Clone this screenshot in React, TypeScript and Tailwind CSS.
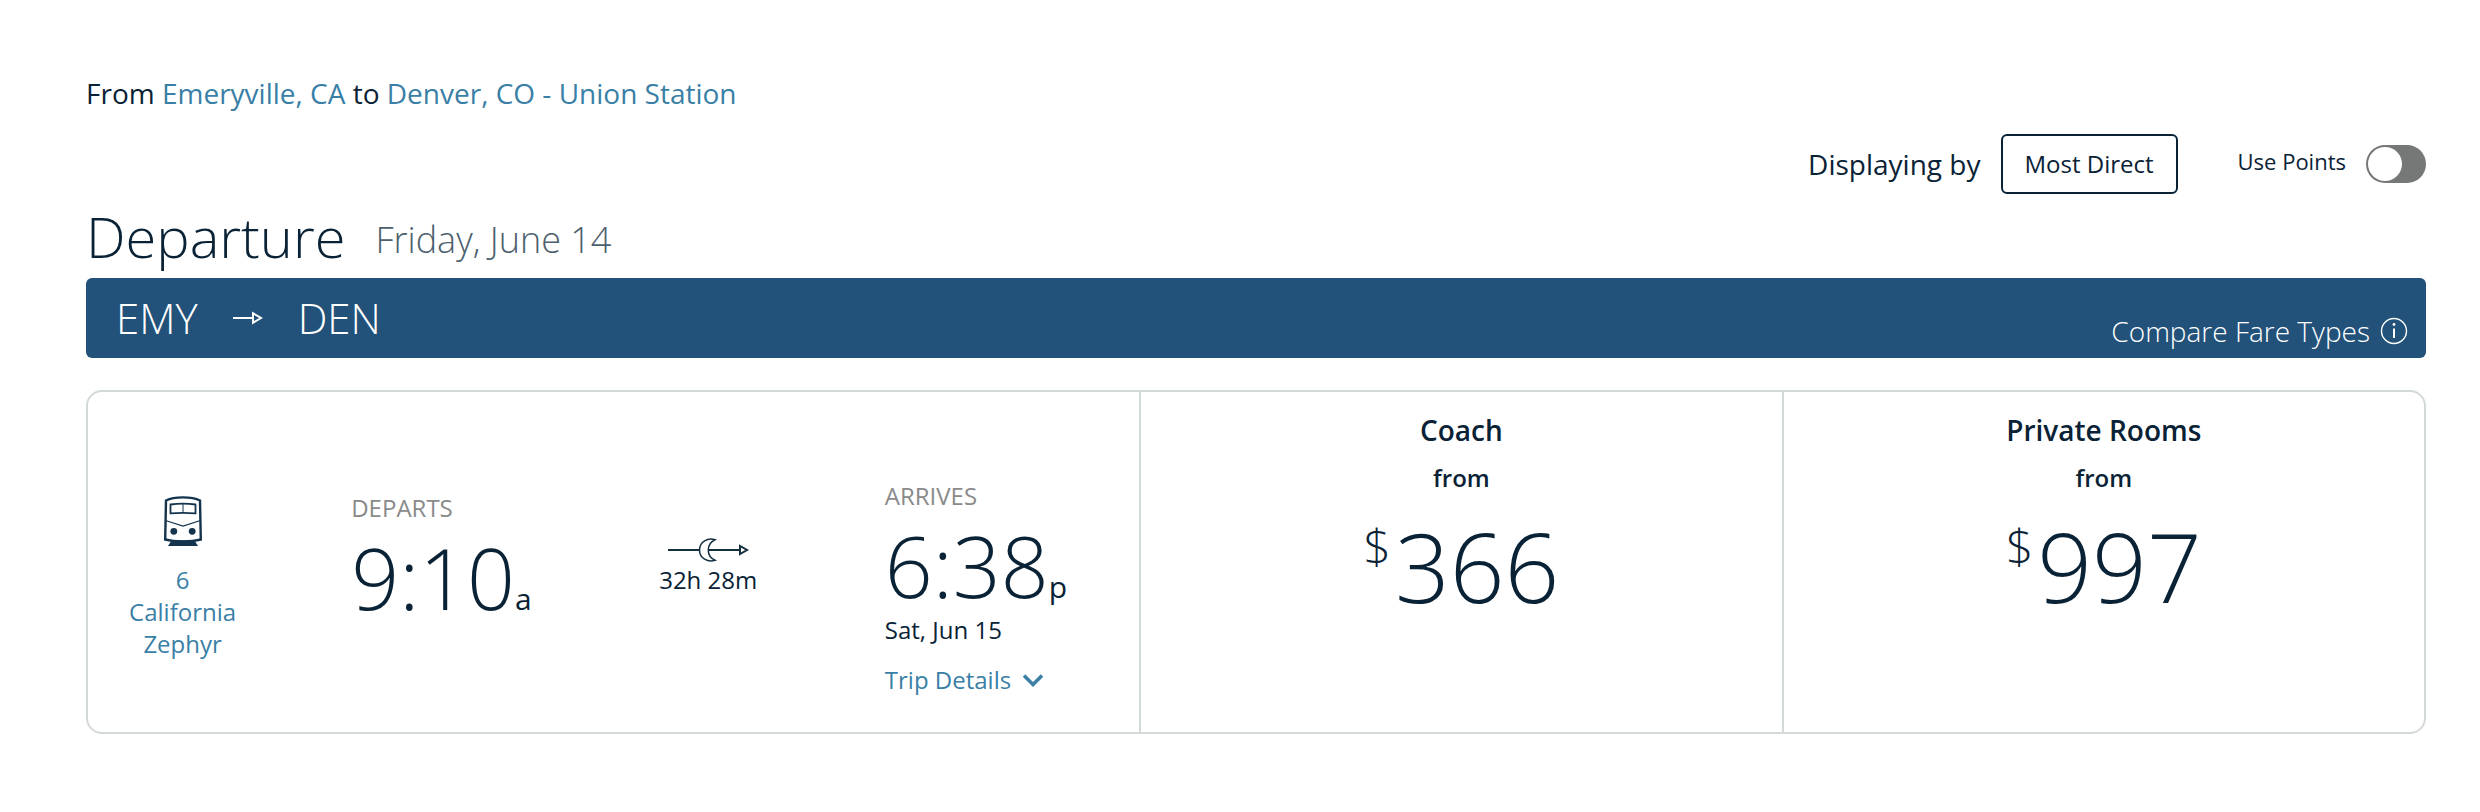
import { useState } from 'react'

interface FareProps {
  name: string
  price: number
}

interface TimeProps {
  label: string
  time: string
  suffix: string
}

function TrainIcon() {
  return (
    <svg width="38" height="50" viewBox="0 0 38 50" fill="none" stroke="#14344d" strokeWidth="2.4" aria-hidden="true">
      <path d="M2 4.5C7 2 13 1.4 19 1.4S31 2 36 4.5L36.8 43.5C31 45 25 45.4 19 45.4S7 45 1.2 43.5Z" />
      <path d="M6.5 8.5C14 7.4 24 7.4 31.5 8.5V17.3C24 16.8 14 16.8 6.5 17.3Z" strokeWidth="1.8" />
      <path d="M19 8V17" strokeWidth="1" />
      <path d="M1.5 24.5L19 30L36.5 24.5" strokeWidth="1.3" />
      <circle cx="9.8" cy="35.3" r="3.4" fill="#14344d" stroke="none" />
      <circle cx="28.2" cy="35.3" r="3.4" fill="#14344d" stroke="none" />
      <path d="M7.5 44.5H30.5L34 50H4Z" fill="#14344d" stroke="none" />
    </svg>
  )
}

function OvernightIcon() {
  return (
    <svg width="82" height="26" viewBox="0 0 82 26" fill="none" stroke="#14303f" strokeWidth="2" aria-hidden="true">
      <path d="M1 12H32M41 12H73" />
      <path d="M48 1.7C41-.6 32.5 3.500 32.500 12S41 24.600 48 22.300C39 18 39 6 48 1.700Z" strokeWidth="1.500" />
      <path d="M73 8V16L80 12Z" />
    </svg>
  )
}

function ArrowIcon() {
  return (
    <svg width="30" height="14" viewBox="0 0 30 14" fill="none" stroke="currentColor" strokeWidth="2" aria-hidden="true">
      <path d="M0 7H19" />
      <path d="M20 2.2V11.8L28 7Z" />
    </svg>
  )
}

function InfoIcon() {
  return (
    <svg width="28" height="28" viewBox="0 0 28 28" fill="none" stroke="currentColor" aria-hidden="true">
      <circle cx="14" cy="14" r="12.5" strokeWidth="1.4" />
      <path d="M14 11.5V21" strokeWidth="2" />
      <circle cx="14" cy="7.5" r="1.4" fill="currentColor" stroke="none" />
    </svg>
  )
}

function TripTime({ label, time, suffix }: TimeProps) {
  return (
    <>
      <p className="text-2xl leading-8 text-[#8a8a8a]">{label}</p>
      <p className="mt-3 whitespace-nowrap text-[84px] leading-[84px] font-light">
        {time}
        <span className="text-[30px] leading-none font-normal">{suffix}</span>
      </p>
    </>
  )
}

function Fare({ name, price }: FareProps) {
  return (
    <section className="flex flex-col items-center border-l-2 border-[#d3d8d8] pt-[18px] font-semibold">
      <h2 className="text-[28px] leading-10">{name}</h2>
      <p className="mt-3 text-2xl leading-8">from</p>
      <p className="mt-6 flex items-start gap-1 font-light">
        <span className="mt-1 text-5xl leading-12">$</span>
        <span className="text-[96px] leading-[96px]">{price}</span>
      </p>
    </section>
  )
}

export default function App() {
  const [usePoints, setUsePoints] = useState(false)

  return (
    <main className="min-h-screen bg-white pt-[73px] pr-[54px] pb-[76px] pl-[86px] font-['Open_Sans',sans-serif] text-[#0a2235]">
      <p className="text-[28px] leading-10">
        From <a href="#origin" className="text-[#3a7fa6]">Emeryville, CA</a> to{' '}
        <a href="#destination" className="text-[#3a7fa6]">Denver, CO - Union Station</a>
      </p>

      <div className="mt-[21px] flex items-center justify-end">
        <span className="text-[28px] leading-10">Displaying by</span>
        <button className="ml-5 h-[60px] rounded-md border-2 border-[#0a2235] px-[22px] text-2xl">Most Direct</button>
        <label htmlFor="use-points" className="ml-[60px] pb-1.5 text-[22px] leading-8">Use Points</label>
        <input
          id="use-points"
          type="checkbox"
          role="switch"
          checked={usePoints}
          onChange={(e) => setUsePoints(e.target.checked)}
          className="ml-5 flex h-[38px] w-[60px] appearance-none items-center rounded-full bg-[#757877] px-0.5 before:size-[34px] before:rounded-full before:bg-white checked:justify-end checked:bg-[#20527a]"
        />
      </div>

      <div className="mt-[10px] flex items-end gap-[30px]">
        <h1 className="text-[56px] leading-16 font-light">Departure</h1>
        <p className="pb-2 text-4xl leading-10 font-light text-[#4c606d]">Friday, June 14</p>
      </div>

      <div className="mt-2.5 flex h-20 items-center justify-between rounded-md bg-[#225279] pr-[18px] pl-[30px] text-white">
        <div className="flex items-center gap-[35px] text-[42px] leading-14 font-light">
          <span>EMY</span>
          <ArrowIcon />
          <span>DEN</span>
        </div>
        <button className="flex items-center gap-2.5 self-end pb-[7px] text-[28px] leading-10 font-light">
          Compare Fare Types
          <InfoIcon />
        </button>
      </div>

      <article className="mt-8 grid grid-cols-[90fr_55fr_55fr] rounded-2xl border-2 border-[#d3d8d8]">
        <div className="grid grid-cols-[18fr_32fr_18fr_32fr] items-start pt-[88px] pb-9">
          <div className="flex flex-col items-center pt-4">
            <TrainIcon />
            <a href="#train" className="mt-[18px] text-center text-2xl leading-8 text-[#3a7fa6]">
              6<br />California<br />Zephyr
            </a>
          </div>
          <div className="pt-3 pl-[74px]">
            <TripTime label="DEPARTS" time="9:10" suffix="a" />
          </div>
          <div className="flex flex-col items-center pt-[58px]">
            <OvernightIcon />
            <p className="text-2xl leading-8">32h 28m</p>
          </div>
          <div className="pl-[82px]">
            <TripTime label="ARRIVES" time="6:38" suffix="p" />
            <p className="mt-1.5 text-2xl leading-8">Sat, Jun 15</p>
            <button className="mt-[18px] flex items-center gap-3 text-2xl leading-8 text-[#3a7fa6]">
              Trip Details
              <svg width="20" height="14" viewBox="0 0 20 14" fill="none" stroke="currentColor" strokeWidth="3.5" aria-hidden="true">
                <path d="M1 2.5L10 11.5L19 2.5" />
              </svg>
            </button>
          </div>
        </div>
        <Fare name="Coach" price={366} />
        <Fare name="Private Rooms" price={997} />
      </article>
    </main>
  )
}
